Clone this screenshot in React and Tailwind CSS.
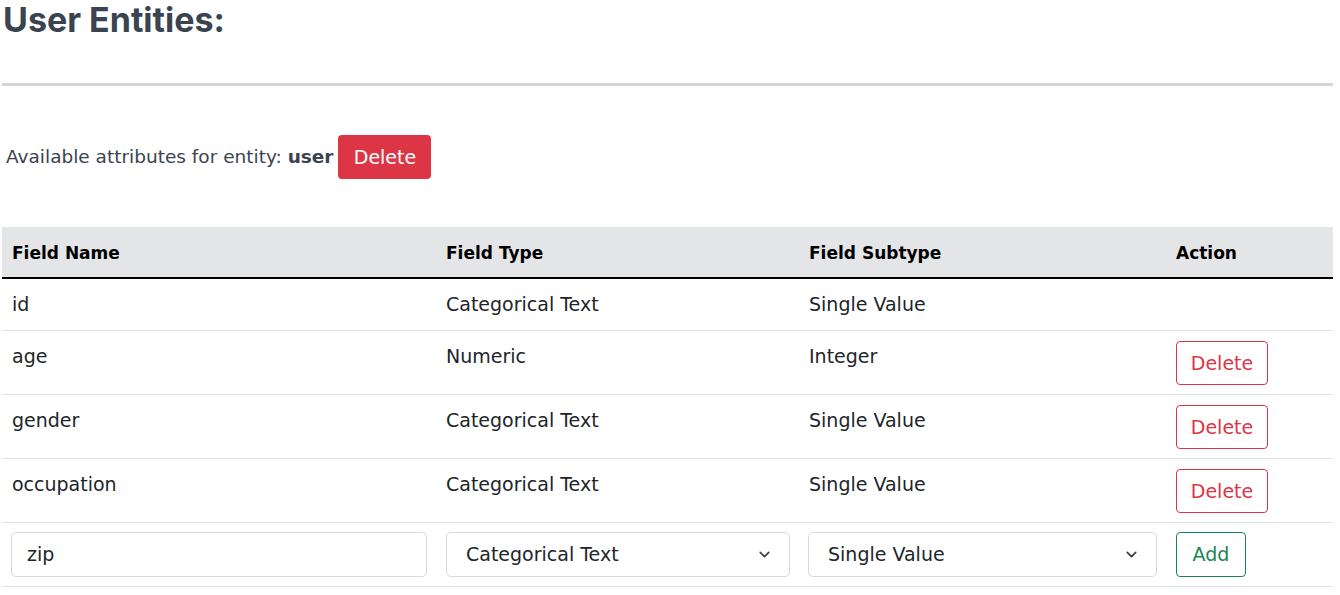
import React from 'react';
import { ChevronDown } from 'lucide-react';

const rows = [
  { name: 'id', type: 'Categorical Text', subtype: 'Single Value', removable: false },
  { name: 'age', type: 'Numeric', subtype: 'Integer', removable: true },
  { name: 'gender', type: 'Categorical Text', subtype: 'Single Value', removable: true },
  { name: 'occupation', type: 'Categorical Text', subtype: 'Single Value', removable: true },
];

const SelectBox = ({ value }) => (
  <div className="flex items-center justify-between h-[45px] border border-[#d6d9de] rounded-[5px] bg-white pl-[19px] pr-[16px] text-[19px] text-[#212529]">
    <span>{value}</span>
    <ChevronDown className="w-[17px] h-[17px] text-[#343a40]" strokeWidth={2.2} />
  </div>
);

export default function App() {
  return (
    <div
      className="bg-white min-h-screen pl-[2px] pr-[7px] text-[#212529]"
      style={{ fontFamily: '"DejaVu Sans", "Noto Sans", sans-serif' }}
    >
      <h1
        className="text-[34px] font-bold text-[#3a4450] leading-[40px] pl-[1px]"
        style={{ fontFamily: 'Inter, "Noto Sans", sans-serif' }}
      >
        User Entities:
      </h1>
      <div className="mt-[43px] h-[3px] bg-[#d3d5d8]" />

      <div className="mt-[49px] flex items-center pl-[4px] text-[18.5px] text-[#3a4450]">
        <span>
          Available attributes for entity: <span className="font-bold">user</span>
        </span>
        <button className="ml-[5px] h-[44px] w-[93px] rounded-[4px] bg-[#dc3545] text-white text-[19px]">
          Delete
        </button>
      </div>

      <table className="mt-[48px] w-full border-collapse text-[19px]">
        <thead>
          <tr className="bg-[#e4e5e7] border-b-2 border-black">
            <th className="w-[434px] h-[51px] pt-[3px] text-left font-bold text-[17px] text-black pl-[10px]">Field Name</th>
            <th className="w-[363px] pt-[3px] text-left font-bold text-[17px] text-black pl-[10px]">Field Type</th>
            <th className="w-[367px] pt-[3px] text-left font-bold text-[17px] text-black pl-[10px]">Field Subtype</th>
            <th className="pt-[3px] text-left font-bold text-[17px] text-black pl-[10px]">Action</th>
          </tr>
        </thead>
        <tbody>
          {rows.map((row) => (
            <tr key={row.name} className="border-b border-[#dee2e6] align-top">
              <td className="pl-[10px] py-[10px] leading-[31px]">{row.name}</td>
              <td className="pl-[10px] py-[10px] leading-[31px]">{row.type}</td>
              <td className="pl-[10px] py-[10px] leading-[31px]">{row.subtype}</td>
              <td className="pl-[10px] py-[10px] pb-[9px] leading-[31px]">
                {row.removable ? (
                  <button className="h-[44px] w-[92px] border border-[#dc3545] rounded-[4px] text-[#dc3545] text-[19px] bg-white">
                    Delete
                  </button>
                ) : (
                  <div className="h-[31px]" />
                )}
              </td>
            </tr>
          ))}
          <tr className="border-b border-[#dee2e6]">
            <td className="pl-[9px] pr-[9px] py-[9px]">
              <div className="h-[45px] border border-[#d6d9de] rounded-[5px] flex items-center pl-[15px] text-[19px]">
                zip
              </div>
            </td>
            <td className="pl-[10px] pr-[9px] py-[9px]">
              <SelectBox value="Categorical Text" />
            </td>
            <td className="pl-[9px] pr-[9px] py-[9px]">
              <SelectBox value="Single Value" />
            </td>
            <td className="pl-[10px] py-[9px]">
              <button className="h-[45px] w-[70px] border border-[#198754] rounded-[4px] text-[#198754] text-[19px] bg-white">
                Add
              </button>
            </td>
          </tr>
        </tbody>
      </table>
    </div>
  );
}
